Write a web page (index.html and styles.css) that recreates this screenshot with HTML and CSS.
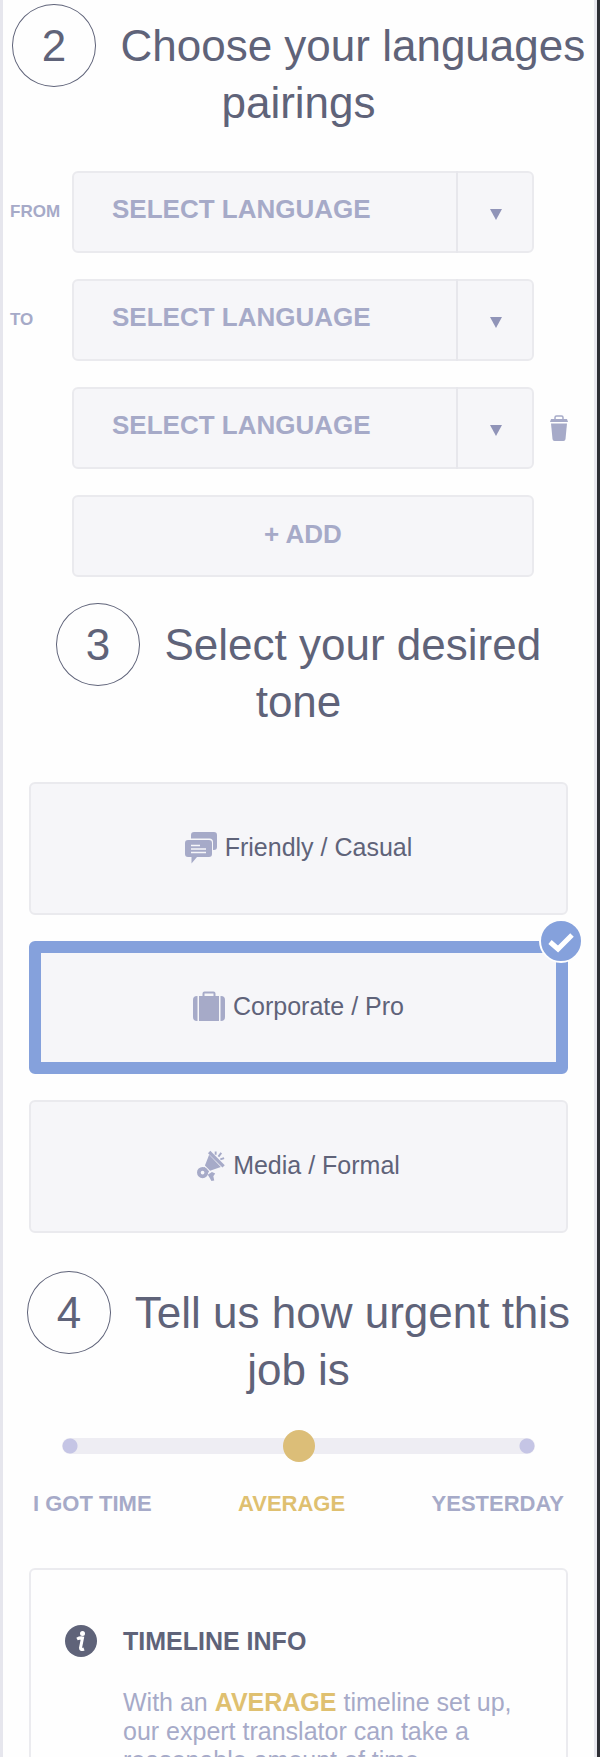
FILE: index.html
```html
<!DOCTYPE html>
<html lang="en">
<head>
    <meta charset="UTF-8">
    <meta name="viewport" content="width=device-width, initial-scale=1.0">
    <title>Order a translation</title>
    <link rel="stylesheet" href="styles.css">
</head>
<body>

<form class="page">
    <!-- Step 2: languages -->
    <h2 class="step"><span class="number">2</span> Choose your languages pairings</h2>
    <div class="languages">
        <div class="row">
            <label for="from">FROM</label>
            <div class="select">
                <select id="from"><option>SELECT LANGUAGE</option></select>
                <span class="arrow"></span>
            </div>
        </div>
        <div class="row">
            <label for="to">TO</label>
            <div class="select">
                <select id="to"><option>SELECT LANGUAGE</option></select>
                <span class="arrow"></span>
            </div>
        </div>
        <div class="row">
            <div class="select">
                <select aria-label="To, second language"><option>SELECT LANGUAGE</option></select>
                <span class="arrow"></span>
            </div>
            <button type="button" class="remove" aria-label="Remove language">
                <svg width="18" height="26" viewBox="0 0 18 26">
                    <path d="M5 4V2.5Q5 1 6.500 1H11.500Q13 1 13 2.500V4" fill="none" stroke="#a6aac8" stroke-width="1.500"/>
                    <path d="M1 4H17L18 7H0Z" fill="#a6aac8"/>
                    <path d="M1 8.500H17L15.500 24Q15.300 26 13.500 26H4.500Q2.700 26 2.500 24Z" fill="#a6aac8"/>
                </svg>
            </button>
        </div>
        <div class="row">
            <button type="button" class="add">+ ADD</button>
        </div>
    </div>

    <!-- Step 3: tone -->
    <h2 class="step"><span class="number">3</span> Select your desired tone</h2>
    <div class="tones">
        <label class="tone">
            <input type="radio" name="tone">
            <svg width="32" height="32" viewBox="0 0 32 32" fill="#a6aac8">
                <path d="M9 0H29Q32 0 32 3V15Q32 18 29 18H28V10Q28 6.500 24.500 6.500H6V3Q6 0 9 0Z"/>
                <path d="M3 8H24Q27 8 27 11V22Q27 25 24 25H12L6.500 31.500V25H3Q0 25 0 22V11Q0 8 3 8Z"/>
                <path d="M6 13.500H15M6 17H21M6 20.500H21" stroke="#f6f6f9" stroke-width="1.500"/>
            </svg>
            Friendly / Casual
        </label>
        <label class="tone">
            <input type="radio" name="tone" checked>
            <svg width="32" height="32" viewBox="0 0 32 32" fill="#a6aac8">
                <path d="M10.500 7V2.500Q10.500 1.500 11.500 1.500H20.500Q21.500 1.500 21.500 2.500V7" fill="none" stroke="#a6aac8" stroke-width="2"/>
                <path d="M4.500 5V30H4Q0 30 0 26V9Q0 5 4 5Z"/>
                <path d="M6 5H26V30H6Z"/>
                <path d="M27.500 5H28Q32 5 32 9V26Q32 30 28 30H27.500Z"/>
            </svg>
            Corporate / Pro
            <span class="check">
                <svg width="40" height="40" viewBox="0 0 40 40">
                    <path d="M9 21L17 28L31 14" fill="none" stroke="#fff" stroke-width="5"/>
                </svg>
            </span>
        </label>
        <label class="tone">
            <input type="radio" name="tone">
            <svg width="28" height="32" viewBox="1 0 30 32" fill="#a6aac8">
                <path d="M14 1L29.500 16.500" stroke="#a6aac8" stroke-width="3.500"/>
                <path d="M14 4L26.500 17L15 21L9.500 15.500Z"/>
                <path d="M9 17L14 21.500L12 24.500L6.500 19Z"/>
                <circle cx="7" cy="23" r="4" fill="none" stroke="#a6aac8" stroke-width="4"/>
                <path d="M12.500 25.500L17 22.500L20.500 24L18.500 27L19.500 31.500L16.500 32L14.500 28.500Z"/>
                <path d="M21 4V0.500M24 6L27 2M26 9L30 7.500" stroke="#a6aac8" stroke-width="2"/>
            </svg>
            Media / Formal
        </label>
    </div>

    <!-- Step 4: urgency -->
    <h2 class="step"><span class="number">4</span> Tell us how urgent this job is</h2>
    <input class="slider" type="range" min="0" max="2" value="1" aria-label="Urgency">
    <div class="slider-labels">
        <span>I GOT TIME</span>
        <span class="gold">AVERAGE</span>
        <span>YESTERDAY</span>
    </div>

    <div class="info">
        <svg width="32" height="32" viewBox="0 0 32 32">
            <circle cx="16" cy="16" r="16" fill="#5f6379"/>
            <circle cx="17.500" cy="8.500" r="2.500" fill="#fff"/>
            <path d="M12 14Q15 12.500 17.500 13L15.500 23Q15.500 25.500 19 24" fill="none" stroke="#fff" stroke-width="3"/>
        </svg>
        <div>
            <h3>TIMELINE INFO</h3>
            <p>With an <b class="gold">AVERAGE</b> timeline set up, our expert translator can take a reasonable amount of time</p>
        </div>
    </div>
</form>

</body>
</html>
```
FILE: styles.css
```css
* {
    box-sizing: border-box;
}
body {
    margin: 0;
    background-color: #2e3036;
    font-family: "Liberation Sans", Arial, sans-serif;
    font-size: 25px;
    color: #5f6379;
}
.page {
    height: 100vh;
    overflow: hidden;
    margin-right: 3px;
    padding-top: 17px;
    background-color: #fefefe;
    border-left: 3px solid #e6e6ed;
    border-right: 3px solid #e9e9ef;
}
svg {
    display: block;
    flex: none;
}

/* Step headings */
.step {
    margin: 0;
    padding: 0 6px;
    font-size: 44px;
    font-weight: normal;
    line-height: 57px;
    text-align: center;
}
.number {
    margin-right: 12px;
    padding: 16px 29px;
    border: 1px solid #5f6379;
    border-radius: 50%;
}

/* Languages */
.languages {
    display: grid;
    gap: 26px;
    margin: 40px 0 39px;
}
.row {
    display: grid;
    grid-template-columns: 62px 1fr 60px;
    align-items: center;
    padding-left: 7px;
}
.row label {
    font-size: 17px;
    font-weight: bold;
    color: #a6aac8;
}
.select {
    grid-column: 2;
    position: relative;
}
.select select,
.add {
    display: block;
    width: 100%;
    height: 82px;
    background-color: #f6f6f9;
    border: 2px solid #eaeaee;
    border-radius: 6px;
    font: bold 26px "Liberation Sans", Arial, sans-serif;
    color: #a6aac8;
    cursor: pointer;
}
.select select {
    appearance: none;
    padding: 0 76px 6px 38px;
}
.add {
    grid-column: 2;
    padding: 0 0 4px;
}
.arrow {
    position: absolute;
    top: 0;
    right: 0;
    bottom: 0;
    display: flex;
    align-items: center;
    justify-content: center;
    width: 78px;
    padding-top: 4px;
    border-left: 2px solid #e7e7ec;
    pointer-events: none;
}
.arrow::before {
    content: "";
    border: 6px solid transparent;
    border-top: 11px solid #9094b8;
    border-bottom: 0;
}
.remove {
    justify-self: start;
    margin-left: 16px;
    padding: 0;
    border: none;
    background: none;
    cursor: pointer;
}

/* Tone cards */
.tones {
    display: grid;
    gap: 26px;
    margin: 52px 26px 51px;
}
.tone {
    position: relative;
    display: flex;
    align-items: center;
    justify-content: center;
    gap: 8px;
    height: 133px;
    padding-bottom: 2px;
    background-color: #f6f6f9;
    border: 2px solid #eaeaee;
    border-radius: 6px;
    cursor: pointer;
}
.tone input {
    position: absolute;
    opacity: 0;
}
.tone:has(input:checked) {
    border: 12px solid #85a1dc;
}
.check {
    position: absolute;
    top: -34px;
    right: -27px;
    background-color: #85a1dc;
    border: 2px solid #fefefe;
    border-radius: 50%;
}

/* Urgency slider */
.slider {
    appearance: none;
    display: block;
    width: calc(100% - 118px);
    height: 32px;
    margin: 32px auto 29px;
    background: none;
}
.slider::-webkit-slider-runnable-track {
    height: 16px;
    border-radius: 8px;
    background:
        radial-gradient(circle at 8px 8px, #c5c5e5 7px, transparent 8px),
        radial-gradient(circle at calc(100% - 8px) 8px, #c5c5e5 7px, transparent 8px),
        #eeedf3;
}
.slider::-webkit-slider-thumb {
    appearance: none;
    width: 32px;
    height: 32px;
    margin-top: -8px;
    border-radius: 50%;
    background-color: #dcbe78;
}
.slider-labels {
    display: flex;
    justify-content: space-between;
    margin: 0 30px 51px;
    font-size: 22px;
    font-weight: bold;
    line-height: 26px;
    color: #a6aac8;
}
.gold {
    color: #dfc070;
}

/* Timeline info */
.info {
    display: flex;
    align-items: flex-start;
    gap: 26px;
    margin: 0 26px;
    padding: 55px 34px;
    border: 2px solid #ebebef;
    border-radius: 6px;
}
.info h3 {
    margin: 0 0 31px;
    font-size: 25px;
    line-height: 32px;
}
.info p {
    margin: 0;
    line-height: 29px;
    color: #a6aac8;
}
```
